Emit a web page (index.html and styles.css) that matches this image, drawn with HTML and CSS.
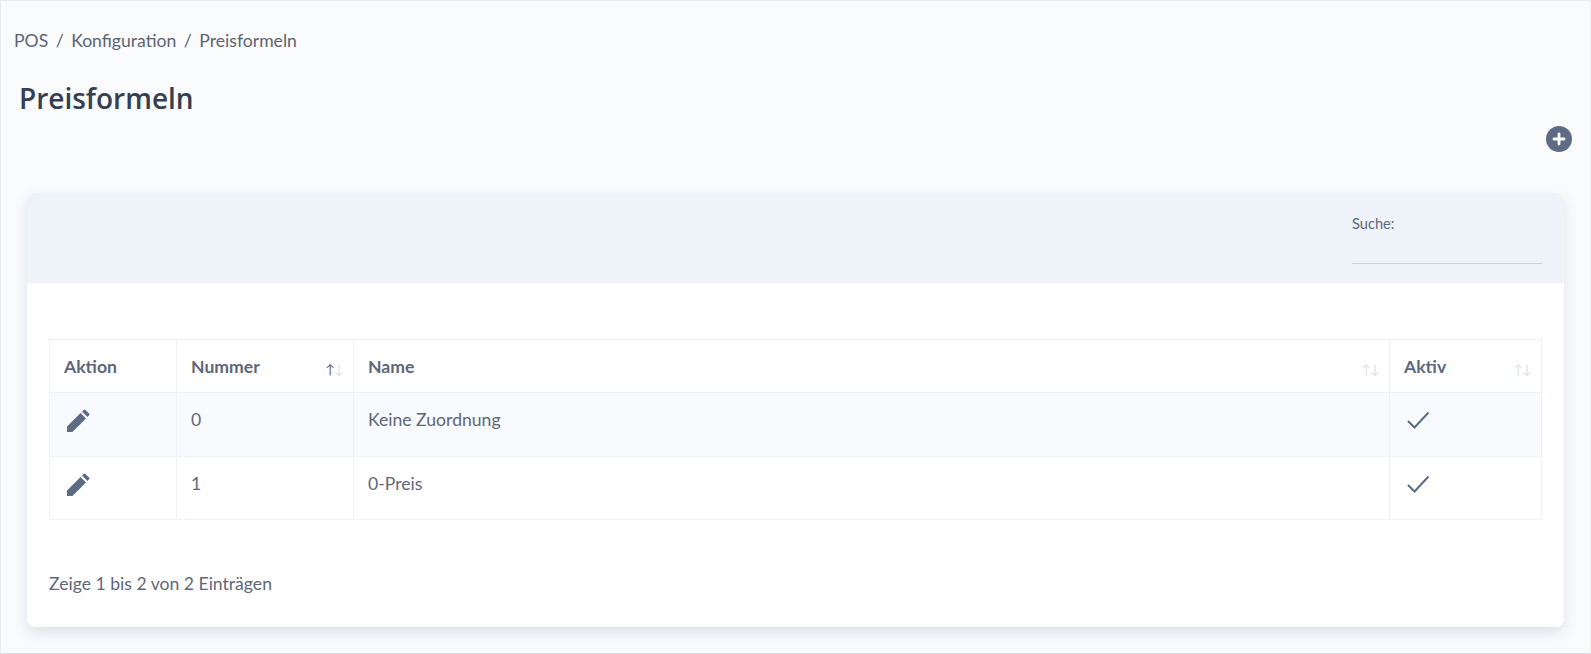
FILE: index.html
```html
<!DOCTYPE html>
<html lang="de">
<head>
<meta charset="utf-8">
<title>Preisformeln</title>
<link rel="stylesheet" href="styles.css">
</head>
<body>
<div class="page">
  <nav class="crumbs"><span>POS</span><span class="sep">/</span><span>Konfiguration</span><span class="sep">/</span><span>Preisformeln</span></nav>
  <h1 class="title">Preisformeln</h1>
  <div class="actions">
    <button class="add" aria-label="Neu"><svg viewBox="0 0 26 26" width="26" height="26"><circle cx="13" cy="13" r="13" fill="#5e6b85"/><path d="M13 8v10M8 13h10" stroke="#fff" stroke-width="2.800" stroke-linecap="round"/></svg></button>
  </div>
  <section class="card">
    <header class="card-head">
      <label class="search"><span>Suche:</span><input type="text"></label>
    </header>
    <div class="card-body">
      <table class="grid">
        <colgroup><col class="c1"><col class="c2"><col><col class="c4"></colgroup>
        <thead>
          <tr>
            <th>Aktion</th>
            <th class="sort active">Nummer<span class="arrows"><b>↑</b><i>↓</i></span></th>
            <th class="sort">Name<span class="arrows"><b>↑</b><i>↓</i></span></th>
            <th class="sort">Aktiv<span class="arrows"><b>↑</b><i>↓</i></span></th>
          </tr>
        </thead>
        <tbody>
          <tr class="odd">
            <td><svg class="pen" viewBox="0 0 24 24" width="24" height="24"><path d="M1 23v-5.400L14.600 4l5.400 5.400L6.400 23z M16 2.600l1.700-1.700a1.200 1.200 0 0 1 1.700 0l3.700 3.700a1.200 1.200 0 0 1 0 1.700L21.400 8z"/></svg></td>
            <td>0</td>
            <td>Keine Zuordnung</td>
            <td><svg class="chk" viewBox="0 0 24 20" width="24" height="20"><path d="M2 11l6.500 6.500L22.500 2.500" /></svg></td>
          </tr>
          <tr>
            <td><svg class="pen" viewBox="0 0 24 24" width="24" height="24"><path d="M1 23v-5.400L14.600 4l5.400 5.400L6.400 23z M16 2.600l1.700-1.700a1.200 1.200 0 0 1 1.700 0l3.700 3.700a1.200 1.200 0 0 1 0 1.700L21.400 8z"/></svg></td>
            <td>1</td>
            <td>0-Preis</td>
            <td><svg class="chk" viewBox="0 0 24 20" width="24" height="20"><path d="M2 11l6.500 6.500L22.500 2.500" /></svg></td>
          </tr>
        </tbody>
      </table>
      <p class="info">Zeige 1 bis 2 von 2 Einträgen</p>
    </div>
  </section>
</div>
</body>
</html>
```
FILE: styles.css
```css
* { box-sizing: border-box; }
html, body { margin: 0; height: 100%; }
body { font-family: "Lato", "Open Sans", sans-serif; color: #5f6778; background: #fafbfd; overflow: hidden; }
.page { height: 654px; border: 1px solid #e8ebf2; border-right-color: #eceef4; border-bottom-color: #d9dce6; padding-top: 29px; }
.crumbs { display: flex; gap: 7.500px; padding-left: 13px; font-size: 17.600px; line-height: 22px; color: #5c6470; }
.title { margin: 26px 0 0 18px; font-family: "Open Sans", sans-serif; font-size: 28px; line-height: 40px; font-weight: 600; color: #343f52; }
.actions { display: flex; justify-content: flex-end; padding: 0 18px 0 0; margin-top: 8px; height: 26px; }
.add { display: block; width: 26px; height: 26px; padding: 0; border: 0; background: none; }
.add svg { display: block; }
.card { margin: 41px 26px 0 26px; background: #fff; border-radius: 8px; box-shadow: 0 6px 14px rgba(70, 80, 110, .15); overflow: hidden; }
.card-head { height: 90px; background: #eef2f9; padding: 21px 22px 0 0; display: flex; justify-content: flex-end; }
.search { display: flex; flex-direction: column; width: 190px; font-size: 14.600px; line-height: 20px; color: #5f6778; }
.search input { height: 30px; margin: 0; border: 0; border-bottom: 1px solid #cfd2d8; background: transparent; outline: 0; }
.card-body { padding: 56px 22px 0 22px; height: 344px; }
.grid { width: 100%; table-layout: fixed; border-collapse: collapse; font-size: 17.600px; }
.c1 { width: 127px; }
.c2 { width: 177px; }
.c4 { width: 152px; }
.grid th, .grid td { border: 1px solid #eef1f6; padding: 0 14px; text-align: left; vertical-align: top; }
.grid th { height: 53px; padding-top: 16px; font-weight: 700; font-size: 17.600px; line-height: 22px; color: #5e6678; position: relative; }
.grid td { height: 64px; padding-top: 15px; line-height: 24px; }
.grid tbody tr:last-child td { height: 63px; }
.odd td { background: #f8fafd; }
.arrows { position: absolute; right: 10px; top: 19px; font-size: 13px; line-height: 20px; letter-spacing: -1px; font-weight: 400; color: #dde0e8; }
.arrows b, .arrows i { font-weight: 400; font-style: normal; }
.active .arrows b { color: #5e6678; }
.pen { display: block; margin-top: 1px; margin-left: 2px; fill: #5e6b85; }
.chk { display: block; margin-top: 2px; margin-left: 2px; fill: none; stroke: #5e6b85; stroke-width: 2; }
.info { margin: 53px 0 0; font-size: 17.600px; line-height: 22px; }
```
